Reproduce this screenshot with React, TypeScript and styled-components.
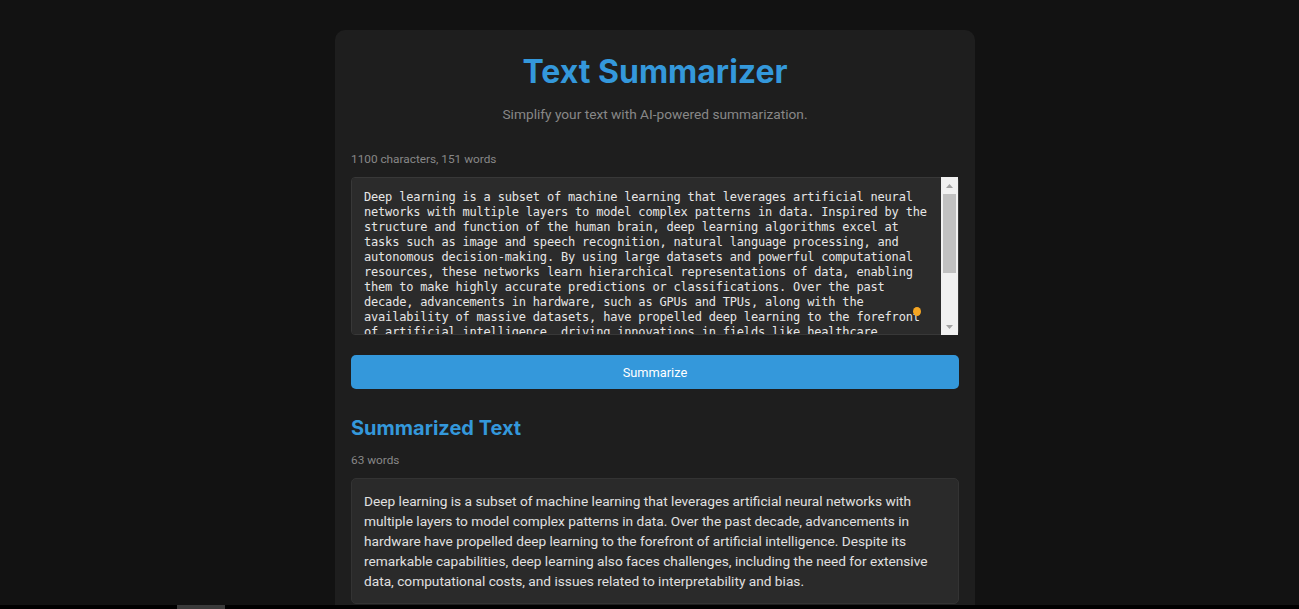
import React from "react";
import styled, { createGlobalStyle } from "styled-components";

const sourceText =
  "Deep learning is a subset of machine learning that leverages artificial neural networks with multiple layers to model complex patterns in data. Inspired by the structure and function of the human brain, deep learning algorithms excel at tasks such as image and speech recognition, natural language processing, and autonomous decision-making. By using large datasets and powerful computational resources, these networks learn hierarchical representations of data, enabling them to make highly accurate predictions or classifications. Over the past decade, advancements in hardware, such as GPUs and TPUs, along with the availability of massive datasets, have propelled deep learning to the forefront of artificial intelligence, driving innovations in fields like healthcare, finance, and autonomous vehicles. Despite its remarkable capabilities, deep learning also faces challenges, including the need for extensive data, computational costs, and issues related to interpretability and bias. Researchers continue to explore new architectures and training methods to make these models more efficient and transparent.";

const summaryText =
  "Deep learning is a subset of machine learning that leverages artificial neural networks with multiple layers to model complex patterns in data. Over the past decade, advancements in hardware have propelled deep learning to the forefront of artificial intelligence. Despite its remarkable capabilities, deep learning also faces challenges, including the need for extensive data, computational costs, and issues related to interpretability and bias.";

const Arrow = ({ up }: { up?: boolean }) => (
  <svg width="7" height="4" viewBox="0 0 7 4">
    <path d={up ? "M0 4 L3.5 0 L7 4 Z" : "M0 0 L3.5 4 L7 0 Z"} fill="#a3a3a3" />
  </svg>
);

export default function App() {
  return (
    <>
      <GlobalStyle />
      <Page>
        <Card>
          <Title>Text Summarizer</Title>
          <Subtitle>Simplify your text with AI-powered summarization.</Subtitle>

          <Meta $gap={27}>1100 characters, 151 words</Meta>
          <InputWrap>
            <TextInput defaultValue={sourceText} spellCheck={false} />
            <Scrollbar>
              <ScrollButton>
                <Arrow up />
              </ScrollButton>
              <Track>
                <Thumb />
              </Track>
              <ScrollButton>
                <Arrow />
              </ScrollButton>
            </Scrollbar>
            <Dot />
          </InputWrap>

          <SummarizeButton>Summarize</SummarizeButton>

          <SectionTitle>Summarized Text</SectionTitle>
          <Meta $gap={11}>63 words</Meta>
          <SummaryBox>{summaryText}</SummaryBox>
        </Card>
      </Page>
      <BottomBar>
        <BottomThumb />
      </BottomBar>
    </>
  );
}

const GlobalStyle = createGlobalStyle`
  html, body {
    margin: 0;
    padding: 0;
    background: #121212;
  }
  body {
    font-family: Roboto, "Noto Sans", sans-serif;
    color: #e0e0e0;
  }
`;

const Page = styled.div`
  display: flex;
  justify-content: center;
  padding: 30px 0 40px 11px;
`;

const Card = styled.div`
  width: 640px;
  box-sizing: border-box;
  background: #1e1e1e;
  border-radius: 10px;
  padding: 22px 16px 20px;
  display: flex;
  flex-direction: column;
`;

const Title = styled.h1`
  margin: 0;
  font-family: Inter, "Noto Sans", sans-serif;
  font-size: 32px;
  line-height: 40px;
  font-weight: 700;
  color: #3498db;
  text-align: center;
`;

const Subtitle = styled.p`
  margin: 12px 0 0;
  font-size: 13.7px;
  line-height: 20px;
  color: #888;
  text-align: center;
`;

const Meta = styled.div<{ $gap: number }>`
  margin-top: ${(p) => p.$gap}px;
  font-size: 11.8px;
  line-height: 16px;
  color: #888;
`;

const InputWrap = styled.div`
  position: relative;
  margin-top: 10px;
  display: flex;
`;

const TextInput = styled.textarea`
  flex: 1;
  height: 158px;
  box-sizing: border-box;
  margin: 0;
  padding: 12px 29px 12px 12px;
  resize: none;
  background: #2b2b2b;
  color: #e6e6e6;
  border: 1px solid #383838;
  border-radius: 4px;
  font-family: "DejaVu Sans Mono", "Liberation Mono", monospace;
  font-size: 12px;
  letter-spacing: -0.19px;
  line-height: 15px;
  outline: none;
  overflow-y: scroll;
  scrollbar-width: none;
`;

const Scrollbar = styled.div`
  position: absolute;
  top: 0;
  bottom: 0;
  right: 1px;
  width: 17px;
  background: #f1f1f1;
  display: flex;
  flex-direction: column;
`;

const ScrollButton = styled.div`
  height: 17px;
  display: flex;
  align-items: center;
  justify-content: center;
`;

const Track = styled.div`
  flex: 1;
  padding: 0 2px;
`;

const Thumb = styled.div`
  height: 79px;
  background: #c1c1c1;
`;

const Dot = styled.span`
  position: absolute;
  left: 562px;
  top: 130px;
  width: 8px;
  height: 9px;
  border-radius: 50%;
  background: #f5a623;
`;

const SummarizeButton = styled.button`
  margin-top: 20px;
  height: 34px;
  border: none;
  border-radius: 5px;
  background: #3498db;
  color: #fff;
  font-family: Roboto, "Noto Sans", sans-serif;
  font-size: 12.8px;
  cursor: pointer;
`;

const SectionTitle = styled.h2`
  margin: 26px 0 0;
  font-family: Inter, "Noto Sans", sans-serif;
  font-size: 20px;
  line-height: 26px;
  font-weight: 700;
  color: #3498db;
`;

const SummaryBox = styled.div`
  margin-top: 10px;
  padding: 12px;
  background: #2a2a2a;
  border: 1px solid #333;
  border-radius: 5px;
  font-size: 13.7px;
  line-height: 20px;
  color: #e0e0e0;
`;

const BottomBar = styled.div`
  position: fixed;
  left: 0;
  right: 0;
  bottom: 0;
  height: 4px;
  background: #000;
`;

const BottomThumb = styled.div`
  margin-left: 177px;
  width: 48px;
  height: 4px;
  background: #3a3a3a;
`;
